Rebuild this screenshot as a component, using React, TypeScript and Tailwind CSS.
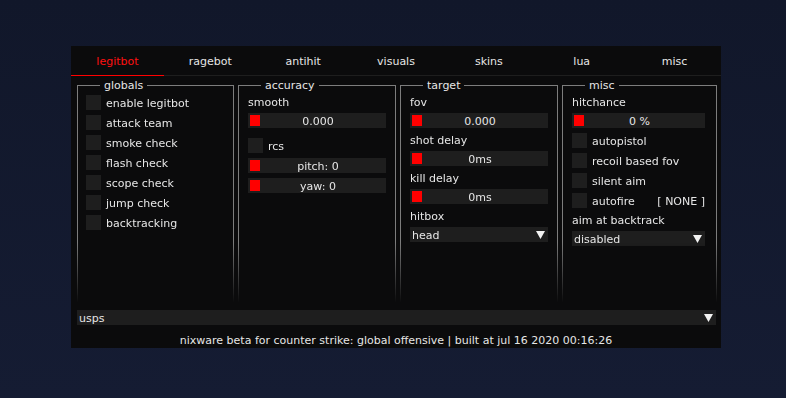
import React from "react";

const font = { fontFamily: '"DejaVu Sans", Verdana, sans-serif' };

function Tri() {
  return (
    <svg width="9" height="8" viewBox="0 0 9 8">
      <polygon points="0,0 9,0 4.5,8" fill="#f2f2f2" />
    </svg>
  );
}

function Check({ label, right }: { label: string; right?: string }) {
  return (
    <div className="flex items-center h-[15px] gap-[5px]">
      <div className="w-[15px] h-[15px] bg-[#1e1e1e] shrink-0" />
      <span className="leading-[13px] pt-[2px]">{label}</span>
      {right && <span className="ml-auto leading-[13px] pt-[2px]">{right}</span>}
    </div>
  );
}

function Slider({ value }: { value: string }) {
  return (
    <div className="relative h-[15px] bg-[#1e1e1e] flex items-center justify-center">
      <div className="absolute left-[2px] top-[2px] w-[10px] h-[11px] bg-[#ff0000]" />
      <span className="leading-[13px] pl-[2px] pt-[2px]">{value}</span>
    </div>
  );
}

function Dropdown({ value }: { value: string }) {
  return (
    <div className="h-[15px] bg-[#1e1e1e] flex items-center justify-between pl-[2px] pr-[3px]">
      <span className="leading-[13px] pt-[2px]">{value}</span>
      <Tri />
    </div>
  );
}

function Label({ text }: { text: string }) {
  return <div className="leading-[13px] h-[13px] pt-[1px]">{text}</div>;
}

function Panel({
  title,
  children,
  right = "pr-[9px]",
}: {
  title: string;
  children: React.ReactNode;
  right?: string;
}) {
  return (
    <div className="relative h-[218px]">
      <div
        className={
          "h-full border-x border-t border-[#7d7d7d] pl-[9px] pt-[9px] [mask-image:linear-gradient(to_bottom,black_72%,transparent_100%)] " +
          right
        }
      >
        {children}
      </div>
      <span className="absolute top-[-6px] left-[23px] px-[4px] bg-[#0b0b0c] leading-[13px]">
        {title}
      </span>
    </div>
  );
}

export default function App() {
  const tabs = ["legitbot", "ragebot", "antihit", "visuals", "skins", "lua", "misc"];
  return (
    <div
      className="w-[786px] h-[398px] bg-gradient-to-b from-[#11172a] to-[#151c33] pt-[46px] pl-[71px] text-[11px] text-[#e6e6e6]"
      style={font}
    >
      <div className="w-[650px] h-[302px] bg-[#0b0b0c] flex flex-col">
        <div className="flex h-[30px]">
          {tabs.map((t, i) => (
            <div
              key={t}
              className={
                "flex-1 flex items-center justify-center border-b pt-[3px] " +
                (i === 0 ? "border-[#ff0000] text-[#ff1010]" : "border-[#1e1e1e]")
              }
            >
              {t}
            </div>
          ))}
        </div>

        <div className="grid grid-cols-[157px_158px_158px_155px] gap-[4px] ml-[6px] mt-[9px]">
          <Panel title="globals">
            <div className="flex flex-col gap-[5px] -ml-[1px]">
              <Check label="enable legitbot" />
              <Check label="attack team" />
              <Check label="smoke check" />
              <Check label="flash check" />
              <Check label="scope check" />
              <Check label="jump check" />
              <Check label="backtracking" />
            </div>
          </Panel>
          <Panel title="accuracy">
            <Label text="smooth" />
            <div className="mt-[5px]">
              <Slider value="0.000" />
            </div>
            <div className="mt-[10px]">
              <Check label="rcs" />
            </div>
            <div className="mt-[5px]">
              <Slider value="pitch: 0" />
            </div>
            <div className="mt-[5px]">
              <Slider value="yaw: 0" />
            </div>
          </Panel>
          <Panel title="target">
            <Label text="fov" />
            <div className="mt-[5px]">
              <Slider value="0.000" />
            </div>
            <div className="mt-[5px]">
              <Label text="shot delay" />
            </div>
            <div className="mt-[5px]">
              <Slider value="0ms" />
            </div>
            <div className="mt-[5px]">
              <Label text="kill delay" />
            </div>
            <div className="mt-[5px]">
              <Slider value="0ms" />
            </div>
            <div className="mt-[5px]">
              <Label text="hitbox" />
            </div>
            <div className="mt-[5px]">
              <Dropdown value="head" />
            </div>
          </Panel>
          <Panel title="misc" right="pr-[11px]">
            <Label text="hitchance" />
            <div className="mt-[5px]">
              <Slider value="0 %" />
            </div>
            <div className="mt-[5px] flex flex-col gap-[5px]">
              <Check label="autopistol" />
              <Check label="recoil based fov" />
              <Check label="silent aim" />
              <Check label="autofire" right="[ NONE ]" />
            </div>
            <div className="mt-[5px]">
              <Label text="aim at backtrack" />
            </div>
            <div className="mt-[5px]">
              <Dropdown value="disabled" />
            </div>
          </Panel>
        </div>

        <div className="mt-[7px] ml-[6px] mr-[5px]">
          <Dropdown value="usps" />
        </div>
        <div className="mt-[9px] leading-[13px] text-center">
          nixware beta for counter strike: global offensive | built at jul 16 2020 00:16:26
        </div>
      </div>
    </div>
  );
}
